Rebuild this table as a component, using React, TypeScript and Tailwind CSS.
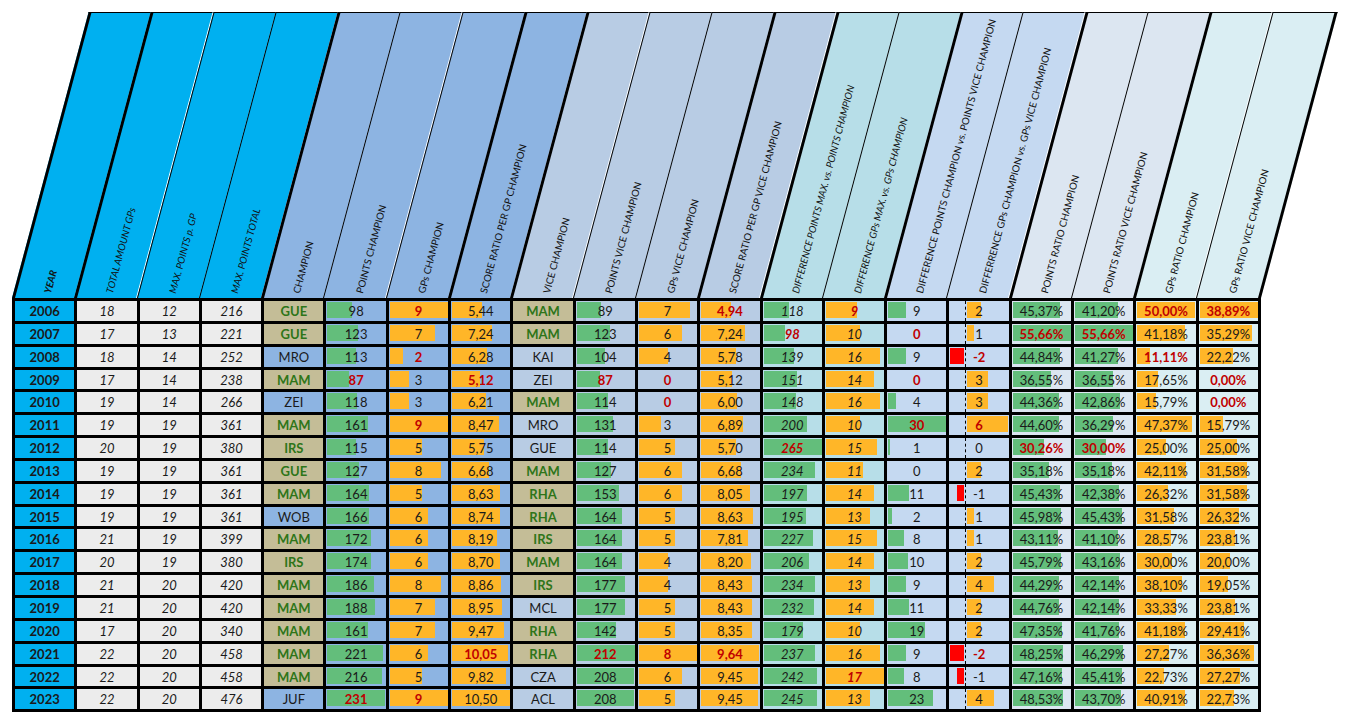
import React from "react";

const HEAD = [
  "YEAR",
  "TOTAL AMOUNT GPs",
  "MAX. POINTS p. GP",
  "MAX. POINTS TOTAL",
  "CHAMPION",
  "POINTS CHAMPION",
  "GPs CHAMPION",
  "SCORE RATIO PER GP CHAMPION",
  "VICE CHAMPION",
  "POINTS VICE CHAMPION",
  "GPs VICE CHAMPION",
  "SCORE RATIO PER GP VICE CHAMPION",
  "DIFFERENCE POINTS MAX. vs. POINTS CHAMPION",
  "DIFFERENCE GPs MAX. vs. GPs CHAMPION",
  "DIFFERENCE POINTS CHAMPION vs. POINTS VICE CHAMPION",
  "DIFFERRENCE GPs CHAMPION vs. GPs VICE CHAMPION",
  "POINTS RATIO CHAMPION",
  "POINTS RATIO VICE CHAMPION",
  "GPs RATIO CHAMPION",
  "GPs RATIO VICE CHAMPION",
];

const GROUP_BG = [
  "bg-[#00b0f0]", "bg-[#00b0f0]", "bg-[#00b0f0]", "bg-[#00b0f0]",
  "bg-[#8db4e2]", "bg-[#8db4e2]", "bg-[#8db4e2]", "bg-[#8db4e2]",
  "bg-[#b8cce4]", "bg-[#b8cce4]", "bg-[#b8cce4]", "bg-[#b8cce4]",
  "bg-[#b7dee8]", "bg-[#b7dee8]",
  "bg-[#c5d9f1]", "bg-[#c5d9f1]",
  "bg-[#dce6f1]", "bg-[#dce6f1]",
  "bg-[#daeef3]", "bg-[#daeef3]",
];

const BODY_BG = [
  "bg-[#00b0f0]", "bg-[#ececec]", "bg-[#ececec]", "bg-[#ececec]",
  "bg-[#8db4e2]", "bg-[#8db4e2]", "bg-[#8db4e2]", "bg-[#8db4e2]",
  "bg-[#b8cce4]", "bg-[#b8cce4]", "bg-[#b8cce4]", "bg-[#b8cce4]",
  "bg-[#b7dee8]", "bg-[#b7dee8]",
  "bg-[#c5d9f1]", "bg-[#c5d9f1]",
  "bg-[#dce6f1]", "bg-[#dce6f1]",
  "bg-[#daeef3]", "bg-[#daeef3]",
];

const THICK = new Set([0, 1, 4, 7, 8, 11, 12, 14, 16, 18]);
const HEAD_ITALIC = new Set([0, 1, 2, 3, 12, 13]);
const ITALIC = new Set([1, 2, 3, 12, 13]);

// data-bar colour per column and column max
const BARS: Record<number, { c: string; max: number }> = {
  5: { c: "bg-[#63be7b]", max: 231 },
  6: { c: "bg-[#ffb628]", max: 9 },
  7: { c: "bg-[#ffb628]", max: 10.5 },
  9: { c: "bg-[#63be7b]", max: 212 },
  10: { c: "bg-[#ffb628]", max: 8 },
  11: { c: "bg-[#ffb628]", max: 9.64 },
  12: { c: "bg-[#63be7b]", max: 265 },
  13: { c: "bg-[#ffb628]", max: 17 },
  14: { c: "bg-[#63be7b]", max: 30 },
  16: { c: "bg-[#63be7b]", max: 55.66 },
  17: { c: "bg-[#63be7b]", max: 55.66 },
  18: { c: "bg-[#ffb628]", max: 50 },
  19: { c: "bg-[#ffb628]", max: 38.89 },
};

const ROWS = [
  "2006|18|12|216|^GUE|98|*9|5,44|^MAM|89|7|*4,94|118|*9|9|2|45,37%|41,20%|*50,00%|*38,89%",
  "2007|17|13|221|^GUE|123|7|7,24|^MAM|123|6|7,24|*98|10|*0|1|*55,66%|*55,66%|41,18%|35,29%",
  "2008|18|14|252|MRO|113|*2|6,28|KAI|104|4|5,78|139|16|9|*-2|44,84%|41,27%|*11,11%|22,22%",
  "2009|17|14|238|^MAM|*87|3|*5,12|ZEI|*87|*0|5,12|151|14|*0|3|36,55%|36,55%|17,65%|*0,00%",
  "2010|19|14|266|ZEI|118|3|6,21|^MAM|114|*0|6,00|148|16|4|3|44,36%|42,86%|15,79%|*0,00%",
  "2011|19|19|361|^MAM|161|*9|8,47|MRO|131|3|6,89|200|10|*30|*6|44,60%|36,29%|47,37%|15,79%",
  "2012|20|19|380|^IRS|115|5|5,75|GUE|114|5|5,70|*265|15|1|0|*30,26%|*30,00%|25,00%|25,00%",
  "2013|19|19|361|^GUE|127|8|6,68|^MAM|127|6|6,68|234|11|0|2|35,18%|35,18%|42,11%|31,58%",
  "2014|19|19|361|^MAM|164|5|8,63|^RHA|153|6|8,05|197|14|11|-1|45,43%|42,38%|26,32%|31,58%",
  "2015|19|19|361|WOB|166|6|8,74|^RHA|164|5|8,63|195|13|2|1|45,98%|45,43%|31,58%|26,32%",
  "2016|21|19|399|^MAM|172|6|8,19|^IRS|164|5|7,81|227|15|8|1|43,11%|41,10%|28,57%|23,81%",
  "2017|20|19|380|^IRS|174|6|8,70|^MAM|164|4|8,20|206|14|10|2|45,79%|43,16%|30,00%|20,00%",
  "2018|21|20|420|^MAM|186|8|8,86|^IRS|177|4|8,43|234|13|9|4|44,29%|42,14%|38,10%|19,05%",
  "2019|21|20|420|^MAM|188|7|8,95|MCL|177|5|8,43|232|14|11|2|44,76%|42,14%|33,33%|23,81%",
  "2020|17|20|340|^MAM|161|7|9,47|^RHA|142|5|8,35|179|10|19|2|47,35%|41,76%|41,18%|29,41%",
  "2021|22|20|458|^MAM|221|6|*10,05|^RHA|*212|*8|*9,64|237|16|9|*-2|48,25%|46,29%|27,27%|36,36%",
  "2022|22|20|458|^MAM|216|5|9,82|CZA|208|6|9,45|242|*17|8|-1|47,16%|45,41%|22,73%|27,27%",
  "2023|22|20|476|JUF|*231|*9|10,50|ACL|208|5|9,45|245|13|23|4|48,53%|43,70%|40,91%|22,73%",
];

function num(s: string) {
  return parseFloat(s.replace("%", "").replace(",", "."));
}

function HeadCell({ i }: { i: number }) {
  const last = i === 19;
  return (
    <div className={last ? "relative h-full w-[65.3px] flex-none" : "relative h-full w-[62.3px] flex-none"}>
      <div
        className={`absolute inset-0 origin-bottom -skew-x-15 border-t border-black ${GROUP_BG[i]} ${
          THICK.has(i) ? "border-l-[3px]" : "border-l"
        } ${last ? "border-r-[3px]" : ""}`}
      />
      <span
        className={`absolute bottom-0 left-[calc(50%+4px)] z-10 origin-left -rotate-75 whitespace-nowrap text-[9.8px] leading-[10px] text-[#111] ${
          HEAD_ITALIC.has(i) ? "italic" : ""
        } ${i === 0 ? "font-bold" : ""}`}
      >
        {HEAD[i]}
      </span>
    </div>
  );
}

function Cell({ raw, col }: { raw: string; col: number }) {
  let s = raw;
  let red = false;
  let tan = false;
  if (s.startsWith("*")) {
    red = true;
    s = s.slice(1);
  }
  if (s.startsWith("^")) {
    tan = true;
    s = s.slice(1);
  }
  const v = num(s);
  let bg = BODY_BG[col];
  if (col === 4 || col === 8) bg = tan ? "bg-[#c4bd97]" : BODY_BG[col];
  let txt = "text-[#1a1a1a]";
  if (red) txt = "text-[#c00000] font-bold";
  else if (tan) txt = "text-[#2e7519] font-bold";
  else if (col === 0) txt = "text-[#1a1a1a] font-bold";
  const bar = BARS[col];
  return (
    <div className={`relative h-[19.85px] overflow-hidden text-center text-[13px] leading-[20px] ${bg}`}>
      {bar && v > 0 && (
        <div className={`absolute left-[1px] top-[1px] h-[16px] ${bar.c}`} style={{ width: (v / bar.max) * 58 }} />
      )}
      {col === 15 && (
        <>
          <div className="absolute bottom-0 left-[16px] top-0 border-l border-dashed border-black" />
          {v > 0 && (
            <div className="absolute left-[17.5px] top-[1px] h-[16px] bg-[#ffb628]" style={{ width: v * 6.85 }} />
          )}
          {v < 0 && (
            <div className="absolute top-[1px] h-[16px] bg-[#ff0000]" style={{ left: 14.5 + v * 7, width: -v * 7 }} />
          )}
        </>
      )}
      <span className={`relative ${txt} ${ITALIC.has(col) ? "italic" : ""}`}>{s}</span>
    </div>
  );
}

export default function App() {
  return (
    <div className="h-[725px] w-[1345px] overflow-hidden bg-white pl-[12px] pt-[12px] font-['Lato',sans-serif]">
      <div className="flex h-[286px]">
        {HEAD.map((_, i) => (
          <HeadCell key={i} i={i} />
        ))}
      </div>
      <div className="grid w-[1249px] grid-cols-[repeat(20,minmax(0,1fr))] gap-[3px] bg-black p-[3px]">
        {ROWS.map((r, ri) =>
          r.split("|").map((c, ci) => <Cell key={`${ri}-${ci}`} raw={c} col={ci} />)
        )}
      </div>
    </div>
  );
}
